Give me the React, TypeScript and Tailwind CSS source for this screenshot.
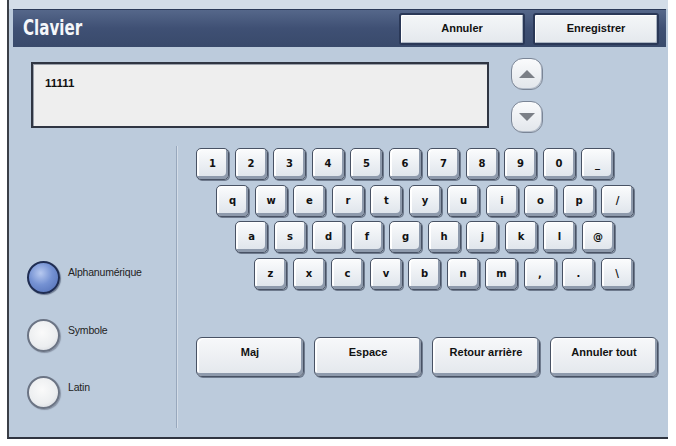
import React from "react";

const rows: { pad: string; keys: string[] }[] = [
  { pad: "pl-[19px]", keys: ["1", "2", "3", "4", "5", "6", "7", "8", "9", "0", "_"] },
  { pad: "pl-[39px]", keys: ["q", "w", "e", "r", "t", "y", "u", "i", "o", "p", "/"] },
  { pad: "pl-[58px]", keys: ["a", "s", "d", "f", "g", "h", "j", "k", "l", "@"] },
  { pad: "pl-[77px]", keys: ["z", "x", "c", "v", "b", "n", "m", ",", ".", "\\"] },
];

const modes = [
  { label: "Alphanumérique", on: true },
  { label: "Symbole", on: false },
  { label: "Latin", on: false },
];

function Key({ k }: { k: string }) {
  return (
    <div className="w-[33px] h-[32px] shrink-0 rounded-[5px] border border-[#485264] bg-gradient-to-b from-[#fbfcfd] to-[#dde3ea] shadow-[inset_-2px_-3px_0_#8e9aac,inset_2px_1px_0_#ffffff,1px_1px_0_#6f7b8e] flex items-center justify-center pb-[1px]">
      <span className="text-[10px] font-bold text-[#111] font-['DejaVu_Sans',sans-serif]">{k}</span>
    </div>
  );
}

function BigButton({ label }: { label: string }) {
  return (
    <div className="w-[108px] h-[40px] shrink-0 rounded-[6px] border border-[#485264] bg-gradient-to-b from-[#f7f8fa] to-[#e3e7ec] shadow-[inset_-2px_-3px_0_#8e9aac,inset_2px_1px_0_#ffffff,1px_1px_0_#6f7b8e] flex justify-center pt-[6px]">
      <span className="text-[11px] font-bold text-[#111]">{label}</span>
    </div>
  );
}

function Radio({ label, on }: { label: string; on: boolean }) {
  return (
    <div className="flex items-start h-[57.5px]">
      {on ? (
        <div className="w-[33px] h-[33px] rounded-full border-2 border-[#1f2d52] bg-[radial-gradient(circle_at_40%_35%,#b7c9f0_0%,#7592d3_45%,#4e6bb3_100%)] shadow-[1px_1px_1px_#6d7a90]" />
      ) : (
        <div className="w-[33px] h-[33px] rounded-full border-2 border-[#6b7484] bg-[radial-gradient(circle_at_45%_40%,#fafafa_0%,#eceef0_60%,#c9ced6_100%)] shadow-[1px_1px_1px_#8893a5]" />
      )}
      <span className="ml-[8px] mt-[4px] text-[10.5px] text-[#222] font-['Liberation_Sans',Arial,sans-serif] tracking-[-0.2px]">{label}</span>
    </div>
  );
}

function HeadButton({ label }: { label: string }) {
  return (
    <div className="w-[126px] h-[32px] rounded-[3px] border-2 border-[#2a3857] bg-gradient-to-b from-[#f4f6f8] to-[#e4e8ed] shadow-[inset_1px_1px_0_#ffffff,inset_-1px_-1px_0_#aab4c2] flex items-center justify-center">
      <span className="text-[11px] font-bold text-[#111]">{label}</span>
    </div>
  );
}

function Arrow({ up }: { up: boolean }) {
  return (
    <div className="w-[32px] h-[32px] rounded-[12px] border border-[#7a8596] bg-gradient-to-b from-[#fafbfc] to-[#e2e6eb] shadow-[inset_-1px_-1px_0_#b4bdca] flex items-center justify-center">
      <svg width="18" height="10" viewBox="0 0 18 10">
        <path d={up ? "M9 1 L17 9 L1 9 Z" : "M1 1 L17 1 L9 9 Z"} fill="#7b7f86" />
      </svg>
    </div>
  );
}

export default function App() {
  return (
    <div className="w-[676px] h-[446px] bg-white font-['Liberation_Sans',Arial,sans-serif]">
      <div className="ml-[7px] w-[661px] h-[439px] border-l-2 border-l-[#3b3f47] border-b-2 border-b-[#2f3440] bg-[#bccbdc] flex flex-col">
        <div className="h-[9px] bg-[#d3dde8]" />
        {/* title bar */}
        <div className="ml-[4px] mr-[2px] h-[38px] bg-gradient-to-b from-[#55678a] via-[#3f5074] to-[#394a6b] border-t border-[#2b3a58] flex items-center pl-[10px] pr-[7px]">
          <span className="inline-block origin-left scale-x-[0.72] text-[21px] font-bold text-[#f4f6fa] leading-none font-['DejaVu_Sans',sans-serif]">Clavier</span>
          <div className="ml-auto flex gap-[8px]">
            <HeadButton label="Annuler" />
            <HeadButton label="Enregistrer" />
          </div>
        </div>
        {/* text field + arrows */}
        <div className="flex pl-[22px] mt-[11px]">
          <div className="mt-[4px] w-[458px] h-[66px] bg-[#eeeeee] border-2 border-[#2f3542] shadow-[inset_1px_1px_0_#9aa0aa] pl-[12px] pt-[6px]">
            <span className="text-[11.5px] font-bold text-[#111]">11111</span>
          </div>
          <div className="ml-[22px] flex flex-col gap-[11px]">
            <Arrow up />
            <Arrow up={false} />
          </div>
        </div>
        {/* lower area */}
        <div className="flex mt-[13px] ml-[4px] h-[282px]">
          <div className="w-[164px] border-r border-[#98a8bd] shadow-[1px_0_0_#d4dde8] pl-[14px] pt-[115px]">
            {modes.map((m) => (
              <Radio key={m.label} label={m.label} on={m.on} />
            ))}
          </div>
          <div className="flex-1 pt-[2px]">
            <div className="flex flex-col gap-[4.7px]">
              {rows.map((r, i) => (
                <div key={i} className={`flex gap-[5.5px] ${r.pad}`}>
                  {r.keys.map((k) => (
                    <Key key={k} k={k} />
                  ))}
                </div>
              ))}
            </div>
            <div className="flex gap-[10px] pl-[19px] mt-[47px]">
              <BigButton label="Maj" />
              <BigButton label="Espace" />
              <BigButton label="Retour arrière" />
              <BigButton label="Annuler tout" />
            </div>
          </div>
        </div>
      </div>
    </div>
  );
}
